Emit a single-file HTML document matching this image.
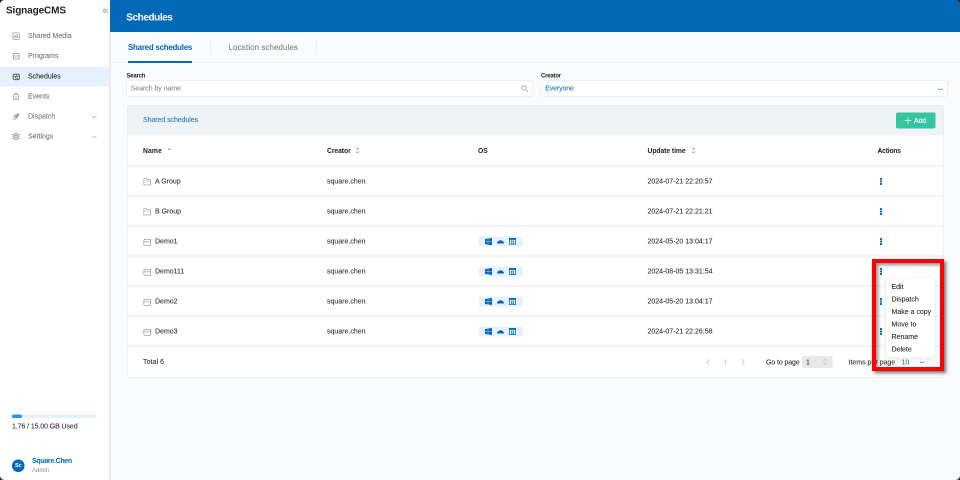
<!DOCTYPE html>
<html lang="en">
<head>
<meta charset="utf-8">
<title>SignageCMS - Schedules</title>
<style>
*{box-sizing:border-box;margin:0;padding:0}
html,body{width:960px;height:480px;overflow:hidden;background:#fafbfd}
body{font-family:"Liberation Sans",Arial,sans-serif;color:#333;position:relative}
#app{position:absolute;left:0;top:0;width:1920px;height:960px;transform:scale(.5);transform-origin:0 0;font-size:14px;will-change:transform}
#wrap{position:absolute;left:0;top:0;width:960px;height:480px;}
#bg{position:absolute;left:-20px;top:-20px;width:1960px;height:1000px;background:#fafbfd}
.abs{position:absolute}
.t{position:absolute;white-space:nowrap;line-height:1;transform:scaleY(1.08);transform-origin:0 84%;-webkit-text-stroke:.2px}
.b{transform:scaleY(1.04);-webkit-text-stroke:0}
.n{transform:none;-webkit-text-stroke:0}
/* sidebar */
#side{position:absolute;left:0;top:0;width:220px;height:960px}
#sidebg{position:absolute;left:-20px;top:-20px;width:240px;height:1000px;background:#fff}
#sideb{position:absolute;left:218px;top:64px;width:3.500px;height:916px;background:#ececec}
#brand{left:12px;top:10px;font-size:20px;font-weight:700;color:#222;letter-spacing:-.25px}
#collapse{left:203px;top:14px;width:15px;height:15px;background:#f3f3f3;border-radius:2px}
.mi{position:absolute;left:0;width:218px;height:40px;color:#7c7c7c;font-size:14px;-webkit-text-stroke:.25px #7c7c7c}
.mi.on{background:#e6f1fd;color:#333;-webkit-text-stroke:.25px #333}
.mi .lb{position:absolute;left:56px;top:12px;line-height:1;white-space:nowrap;transform:scaleY(1.08);transform-origin:0 84%}
.mi svg.ic{position:absolute;left:24px;top:12px;width:16px;height:16px}
.mi svg.ch{position:absolute;left:182px;top:14px;width:13px;height:13px}
/* header */
#hdr{position:absolute;left:220px;top:0;width:1700px;height:64px}
#hdrbg{position:absolute;left:220px;top:-20px;width:1720px;height:84px;background:#0368b6}
#hdr .t{left:32.500px;top:24px;font-size:20px;font-weight:700;color:#fff;letter-spacing:-.85px}
/* tabs */
#tabs{position:absolute;left:220px;top:64px;width:1720px;height:61px;border-bottom:1px solid #e6e8ec}
.sep{position:absolute;top:15px;width:1px;height:31px;background:#e2e4e8}
/* card */
#card{position:absolute;left:254px;top:210px;width:1634px;height:545px;background:#fff;border:1px solid #e3e6ea;border-radius:4px}
#chead{position:absolute;left:0;top:0;width:100%;height:60px;background:#f0f3f6;border-radius:3px 3px 0 0}
.row{position:absolute;left:0;width:100%;height:60px;border-bottom:4px solid #f4f4f4;font-size:14px;color:#333}
.row .t{top:20.500px}
.th .t{transform:scaleY(1.04);font-weight:700;font-size:13.500px;color:#222;top:23.500px;letter-spacing:-.1px;-webkit-text-stroke:0}
.c1{left:31px}.c1b{left:55px}.c2{left:399px}.c3{left:703px}.c4{left:1040px}.c5{left:1500px}
.os{position:absolute;left:703px;top:19px;width:88px;height:20px;background:#e6f1fd;border-radius:4px}
.os svg{position:absolute;top:3px;width:14px;height:14px}
.dots{position:absolute;left:1504px;top:22px;width:6px;height:14px}
.dots i{position:absolute;left:1px;width:4px;height:4px;background:#0368b6;border-radius:1px}
.fic{position:absolute;left:31px;top:21px;width:17px;height:18px}
</style>
</head>
<body>
<div id="wrap">
<div id="app">
<div id="bg"></div>
<div id="hdrbg"></div>

<!-- ===== main header ===== -->
<div id="hdr"><span class="t n">Schedules</span></div>

<!-- ===== tabs ===== -->
<div id="tabs">
  <span class="t b" style="left:36px;top:23px;font-size:16px;font-weight:700;color:#0368b6;letter-spacing:-.55px">Shared schedules</span>
  <div class="abs" style="left:36px;top:57.500px;width:128px;height:4px;background:#0368b6"></div>
  <div class="sep" style="left:200px"></div>
  <span class="t" style="left:237px;top:23px;font-size:16px;color:#858585;letter-spacing:.1px">Location schedules</span>
  <div class="sep" style="left:412px"></div>
</div>

<!-- ===== filters ===== -->
<span class="t b" style="left:253px;top:145px;font-size:12px;font-weight:700;color:#222;letter-spacing:-.45px">Search</span>
<div class="abs" style="left:253px;top:160.500px;width:813px;height:32px;background:#fff;border:1px solid #dfe2e7;border-radius:4px">
  <span class="t" style="left:7.500px;top:7.500px;font-size:14px;color:#8c8c8c;letter-spacing:-.12px">Search by name</span>
  <svg class="abs" style="left:788px;top:8.500px;width:15px;height:15px" viewBox="0 0 16 16" fill="none" stroke="#969696" stroke-width="1.500"><circle cx="6.5" cy="6.5" r="4.6"/><path d="M10 10l4.5 4.5" stroke-linecap="round"/></svg>
</div>
<span class="t b" style="left:1082px;top:145px;font-size:12px;font-weight:700;color:#222;letter-spacing:-.4px">Creator</span>
<div class="abs" style="left:1081.500px;top:160.500px;width:813.500px;height:32px;background:#fff;border:1px solid #dfe2e7;border-radius:4px">
  <span class="t" style="left:8px;top:7.500px;font-size:14px;color:#2876bc;letter-spacing:-.25px">Everyone</span>
  <svg class="abs" style="left:791px;top:10.500px;width:14px;height:14px" viewBox="0 0 14 14" fill="none" stroke="#2b79be" stroke-width="1.400" stroke-linecap="round" stroke-linejoin="round"><path d="M2.500 5.500q4.500 3.500 9 0"/></svg>
</div>

<!-- ===== card ===== -->
<div id="card">
  <div id="chead">
    <span class="t" style="left:31px;top:21px;font-size:14px;color:#2b79be;letter-spacing:-.12px">Shared schedules</span>
    <div class="abs" style="left:1537px;top:14px;width:79px;height:32px;background:#36c5a0;border-radius:4px">
      <svg class="abs" style="left:17px;top:9px;width:14px;height:14px" viewBox="0 0 14 14" stroke="#fff" stroke-width="1.300" fill="none"><path d="M7 .500v13M.500 7h13"/></svg>
      <span class="t" style="left:36px;top:9px;font-size:14px;color:#fff">Add</span>
    </div>
  </div>

  <div class="row th" style="top:60px;height:63px">
    <span class="t c1" style="letter-spacing:.3px">Name</span>
    <svg class="abs" style="left:79px;top:23px;width:10px;height:10px" viewBox="0 0 10 10" fill="none" stroke="#808080" stroke-width="1.300"><path d="M2 6l3-3 3 3"/></svg>
    <span class="t c2">Creator</span>
    <svg class="abs" style="left:455px;top:23px;width:10px;height:14px" viewBox="0 0 10 14" fill="none" stroke="#8c8c8c" stroke-width="1.400"><path d="M2 5l3-3 3 3M2 9l3 3 3-3"/></svg>
    <span class="t c3" style="left:701px">OS</span>
    <span class="t c4">Update time</span>
    <svg class="abs" style="left:1127px;top:23px;width:10px;height:14px" viewBox="0 0 10 14" fill="none" stroke="#8c8c8c" stroke-width="1.400"><path d="M2 5l3-3 3 3M2 9l3 3 3-3"/></svg>
    <span class="t c5" style="letter-spacing:-.4px">Actions</span>
  </div>

  <div class="row" style="top:123px">
    <svg class="fic" viewBox="0 0 17 18" fill="none" stroke="#979797" stroke-width="1.200" stroke-linejoin="round"><path d="M1.700 2.200h5l1.500 2.200h7.200v10.400h-13.700zM1.700 7h13.700"/></svg>
    <span class="t c1b">A Group</span><span class="t c2">square.chen</span><span class="t c4">2024-07-21 22:20:57</span>
    <div class="dots"><i style="top:0"></i><i style="top:5px"></i><i style="top:10px"></i></div>
  </div>
  <div class="row" style="top:183px">
    <svg class="fic" viewBox="0 0 17 18" fill="none" stroke="#979797" stroke-width="1.200" stroke-linejoin="round"><path d="M1.700 2.200h5l1.500 2.200h7.200v10.400h-13.700zM1.700 7h13.700"/></svg>
    <span class="t c1b">B Group</span><span class="t c2">square.chen</span><span class="t c4">2024-07-21 22:21:21</span>
    <div class="dots"><i style="top:0"></i><i style="top:5px"></i><i style="top:10px"></i></div>
  </div>
  <div class="row" style="top:243px">
    <svg class="fic" viewBox="0 0 17 18" fill="none" stroke="#8c8c8c" stroke-width="1.300"><rect x="1.700" y="3.600" width="13.600" height="12" rx="2.200" stroke-width="1.300"/><path d="M1.700 8.700h13.600" stroke-width="1.200"/></svg>
    <span class="t c1b">Demo1</span><span class="t c2">square.chen</span><span class="t c4">2024-05-20 13:04:17</span>
    <div class="os">
      <svg style="left:12px" viewBox="0 0 14 14" fill="#0368b6"><path d="M0 2l5.700-.8v5.400H0zM6.400 1.100L14 0v6.600H6.400zM0 7.300h5.700v5.400L0 11.900zM6.400 7.300H14V14l-7.600-1.100z"/></svg>
      <svg style="left:36px" viewBox="0 0 14 14" fill="#0368b6"><path d="M0 11a7 6.500 0 0 1 14 0z"/></svg>
      <svg style="left:60px" viewBox="0 0 14 14" fill="none" stroke="#0368b6"><rect x=".75" y=".75" width="12.5" height="12.5" stroke-width="1.500"/><path d="M.75 2.200h12.500" stroke-width="3"/><rect x="4.800" y="6" width="4.400" height="5" stroke-width="1.300"/></svg>
    </div>
    <div class="dots"><i style="top:0"></i><i style="top:5px"></i><i style="top:10px"></i></div>
  </div>
  <div class="row" style="top:303px">
    <svg class="fic" viewBox="0 0 17 18" fill="none" stroke="#8c8c8c" stroke-width="1.300"><rect x="1.700" y="3.600" width="13.600" height="12" rx="2.200" stroke-width="1.300"/><path d="M1.700 8.700h13.600" stroke-width="1.200"/></svg>
    <span class="t c1b">Demo111</span><span class="t c2">square.chen</span><span class="t c4">2024-08-05 13:31:54</span>
    <div class="os">
      <svg style="left:12px" viewBox="0 0 14 14" fill="#0368b6"><path d="M0 2l5.700-.8v5.400H0zM6.400 1.100L14 0v6.600H6.400zM0 7.300h5.700v5.400L0 11.900zM6.400 7.300H14V14l-7.600-1.100z"/></svg>
      <svg style="left:36px" viewBox="0 0 14 14" fill="#0368b6"><path d="M0 11a7 6.500 0 0 1 14 0z"/></svg>
      <svg style="left:60px" viewBox="0 0 14 14" fill="none" stroke="#0368b6"><rect x=".75" y=".75" width="12.5" height="12.5" stroke-width="1.500"/><path d="M.75 2.200h12.500" stroke-width="3"/><rect x="4.800" y="6" width="4.400" height="5" stroke-width="1.300"/></svg>
    </div>
    <div class="dots"><i style="top:0"></i><i style="top:5px"></i><i style="top:10px"></i></div>
  </div>
  <div class="row" style="top:363px">
    <svg class="fic" viewBox="0 0 17 18" fill="none" stroke="#8c8c8c" stroke-width="1.300"><rect x="1.700" y="3.600" width="13.600" height="12" rx="2.200" stroke-width="1.300"/><path d="M1.700 8.700h13.600" stroke-width="1.200"/></svg>
    <span class="t c1b">Demo2</span><span class="t c2">square.chen</span><span class="t c4">2024-05-20 13:04:17</span>
    <div class="os">
      <svg style="left:12px" viewBox="0 0 14 14" fill="#0368b6"><path d="M0 2l5.700-.8v5.400H0zM6.400 1.100L14 0v6.600H6.400zM0 7.300h5.700v5.400L0 11.900zM6.400 7.300H14V14l-7.600-1.100z"/></svg>
      <svg style="left:36px" viewBox="0 0 14 14" fill="#0368b6"><path d="M0 11a7 6.500 0 0 1 14 0z"/></svg>
      <svg style="left:60px" viewBox="0 0 14 14" fill="none" stroke="#0368b6"><rect x=".75" y=".75" width="12.5" height="12.5" stroke-width="1.500"/><path d="M.75 2.200h12.500" stroke-width="3"/><rect x="4.800" y="6" width="4.400" height="5" stroke-width="1.300"/></svg>
    </div>
    <div class="dots"><i style="top:0"></i><i style="top:5px"></i><i style="top:10px"></i></div>
  </div>
  <div class="row" style="top:423px">
    <svg class="fic" viewBox="0 0 17 18" fill="none" stroke="#8c8c8c" stroke-width="1.300"><rect x="1.700" y="3.600" width="13.600" height="12" rx="2.200" stroke-width="1.300"/><path d="M1.700 8.700h13.600" stroke-width="1.200"/></svg>
    <span class="t c1b">Demo3</span><span class="t c2">square.chen</span><span class="t c4">2024-07-21 22:26:58</span>
    <div class="os">
      <svg style="left:12px" viewBox="0 0 14 14" fill="#0368b6"><path d="M0 2l5.700-.8v5.400H0zM6.400 1.100L14 0v6.600H6.400zM0 7.300h5.700v5.400L0 11.900zM6.400 7.300H14V14l-7.600-1.100z"/></svg>
      <svg style="left:36px" viewBox="0 0 14 14" fill="#0368b6"><path d="M0 11a7 6.500 0 0 1 14 0z"/></svg>
      <svg style="left:60px" viewBox="0 0 14 14" fill="none" stroke="#0368b6"><rect x=".75" y=".75" width="12.5" height="12.5" stroke-width="1.500"/><path d="M.75 2.200h12.500" stroke-width="3"/><rect x="4.800" y="6" width="4.400" height="5" stroke-width="1.300"/></svg>
    </div>
    <div class="dots"><i style="top:0"></i><i style="top:5px"></i><i style="top:10px"></i></div>
  </div>

  <!-- footer -->
  <div class="abs" style="left:0;top:483px;width:100%;height:60px;font-size:14px;color:#333">
    <span class="t" style="left:31px;top:21.500px;letter-spacing:.15px">Total 6</span>
    <svg class="abs" style="left:1155.500px;top:22.500px;width:10px;height:14px" viewBox="0 0 10 14" fill="none" stroke="#bbb" stroke-width="1.4"><path d="M7.500 1.500L2.500 7l5 5.500"/></svg>
    <span class="t" style="left:1192px;top:22.500px;color:#c4c4c4">1</span>
    <svg class="abs" style="left:1226px;top:22.500px;width:10px;height:14px" viewBox="0 0 10 14" fill="none" stroke="#bbb" stroke-width="1.4"><path d="M2.500 1.500L7.500 7l-5 5.500"/></svg>
    <span class="t" style="left:1277px;top:22.500px;letter-spacing:-.2px">Go to page</span>
    <div class="abs" style="left:1349px;top:18px;width:61px;height:23.500px;background:#e8e8e8;border-radius:4px">
      <span class="t" style="left:8px;top:4.500px;color:#444">1</span>
      <svg class="abs" style="left:40px;top:4px;width:11px;height:15px" viewBox="0 0 10 14" fill="none" stroke="#c2c2c2" stroke-width="1.300"><path d="M2.500 5l2.500-2.500L7.500 5M2.500 9l2.500 2.500L7.500 9"/></svg>
    </div>
    <span class="t" style="left:1442px;top:22.500px">Items per page</span>
    <div class="abs" style="left:1540px;top:18px;width:61px;height:24px;background:#fff;border:1px solid #dfe2e7;border-radius:4px">
      <span class="t" style="left:7px;top:3.500px;color:#2b79be;font-size:14px">10</span>
      <svg class="abs" style="left:41px;top:6px;width:14px;height:12px" viewBox="0 0 14 12" fill="none" stroke="#2b79be" stroke-width="1.400" stroke-linecap="round" stroke-linejoin="round"><path d="M3 4.500q4 3.500 8 0"/></svg>
    </div>
  </div>
</div>

<!-- ===== dropdown menu ===== -->
<div class="abs" style="left:1771px;top:554px;width:100px;height:162px;background:#fff;border:1px solid #e9ebee;border-radius:4px;box-shadow:0 2px 8px rgba(0,0,0,.10);font-size:14px;color:#2a2a2a">
  <span class="t" style="left:11px;top:10.5px">Edit</span>
  <span class="t" style="left:11px;top:35.5px">Dispatch</span>
  <span class="t" style="left:11px;top:60.5px">Make a copy</span>
  <span class="t" style="left:11px;top:85.5px">Move to</span>
  <span class="t" style="left:11px;top:110.5px">Rename</span>
  <span class="t" style="left:11px;top:135.5px">Delete</span>
</div>

<!-- ===== red highlight ===== -->
<div class="abs" style="left:1744px;top:518px;width:144px;height:224px;border:8px solid #fe0000;box-shadow:4px 4px 7px rgba(0,0,0,.55), inset 4px 4px 7px rgba(0,0,0,.45)"></div>

<!-- ===== sidebar ===== -->
<div id="sidebg"></div>
<div id="side">
  <div id="sideb"></div>
  <span class="t n" id="brand">SignageCMS</span>
  <div class="abs" id="collapse">
    <svg class="abs" style="left:2px;top:2px;width:11px;height:11px" viewBox="0 0 11 11" fill="none" stroke="#969696" stroke-width="1.200"><path d="M5 1.500L1.500 5.500 5 9.500M9.500 1.500L6 5.500l3.500 4"/></svg>
  </div>

  <div class="mi" style="top:52px">
    <svg class="ic" viewBox="0 0 16 16" fill="none" stroke="#9c9c9c" stroke-width="1.400" stroke-linejoin="round"><rect x="1.700" y="1.700" width="13" height="13" rx="2"/><path d="M3.500 11.500l2.500-5.500 2.200 4 2-5 2.500 6.500z" stroke-width="1.200"/></svg>
    <span class="lb">Shared Media</span>
  </div>
  <div class="mi" style="top:92px">
    <svg class="ic" viewBox="0 0 16 16" fill="none" stroke="#8e8e8e" stroke-width="1.700"><rect x="2.500" y="3" width="11.500" height="11" rx="1"/><path d="M6.200 7.500h4v2.200h-4z" stroke-width="1.100"/></svg>
    <span class="lb">Programs</span>
  </div>
  <div class="mi on" style="top:133px">
    <svg class="ic" viewBox="0 0 16 16" fill="none" stroke="#4a5058" stroke-width="1.700"><rect x="2.200" y="3.300" width="12.600" height="11" rx="3"/><path d="M2.200 7.500h12.600M5.500 10.300h2.500v3M11 10v3.500M8.500 3.500v3.500" stroke-width="1.400"/></svg>
    <span class="lb">Schedules</span>
  </div>
  <div class="mi" style="top:173px">
    <svg class="ic" viewBox="0 0 16 16" fill="none" stroke="#9c9c9c" stroke-width="1.400"><rect x="2.600" y="4.300" width="10.800" height="10.400" rx="1.600"/><path d="M6 4.300V1.800h4v2.500"/><path d="M6 7v7.500M10 7v7.500" stroke-width="1.100"/></svg>
    <span class="lb">Events</span>
  </div>
  <div class="mi" style="top:213px">
    <svg class="ic" viewBox="0 0 16 16" fill="none" stroke="#8c8c8c" stroke-width="1.300" stroke-linejoin="round"><path d="M14 2L4 6.500l3.500 2L9.500 12zM14 2L7.500 8.500" fill="#b5b5b5"/><path d="M2.500 14l3.500-3.500M2.500 11l2-2M5.500 14l2-2"/></svg>
    <span class="lb">Dispatch</span>
    <svg class="ch" viewBox="0 0 14 14" fill="none" stroke="#969696" stroke-width="1.300" stroke-linecap="round" stroke-linejoin="round"><path d="M2.500 5.500l4.500 3.500 4.500-3.500"/></svg>
  </div>
  <div class="mi" style="top:253px">
    <svg class="ic" viewBox="0 0 16 16" fill="none" stroke="#6e6e6e" stroke-width="1.300" stroke-linejoin="round"><path d="M8 1.200l6 3.400v6.800l-6 3.400-6-3.400V4.600z"/><circle cx="8" cy="8" r="2.500"/></svg>
    <span class="lb">Settings</span>
    <svg class="ch" viewBox="0 0 14 14" fill="none" stroke="#969696" stroke-width="1.300" stroke-linecap="round" stroke-linejoin="round"><path d="M2.500 5.500l4.500 3.500 4.500-3.500"/></svg>
  </div>

  <!-- storage -->
  <div class="abs" style="left:24px;top:828.500px;width:170px;height:7.500px;background:#e6f1fd;border-radius:4px"></div>
  <div class="abs" style="left:24px;top:828.500px;width:20px;height:7.500px;background:#1e96ff;border-radius:4px"></div>
  <span class="t" style="left:24px;top:845px;font-size:14px;color:#333;letter-spacing:-.18px">1.76 / 15.00 GB Used</span>

  <!-- user -->
  <div class="abs" style="left:24px;top:919px;width:24.500px;height:24.500px;border-radius:50%;background:#0368b6"></div>
  <span class="t b" style="left:30px;top:925px;font-size:11px;font-weight:700;color:#fff;letter-spacing:-.3px">Sc</span>
  <span class="t b" style="left:64px;top:914px;font-size:14px;font-weight:700;color:#0368b6;letter-spacing:-.6px">Square.Chen</span>
  <span class="t" style="left:64px;top:934px;font-size:12px;color:#9a9a9a">Admin</span>
</div>

<!-- window corner artefacts -->
<div class="abs" style="left:0;top:0;width:1920px;height:960px;pointer-events:none;box-shadow:0 0 0 20px #2b2b2b;border-radius:9px"></div>

</div>
</div>
</body>
</html>
